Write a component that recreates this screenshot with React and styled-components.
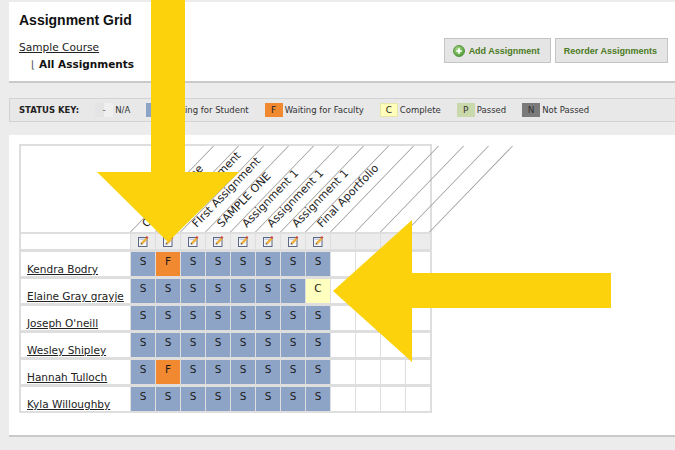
import React from "react";
import styled, { createGlobalStyle, css } from "styled-components";

const GlobalStyle = createGlobalStyle`
  html, body { margin: 0; padding: 0; background: #ececec; }
  body { font-family: "DejaVu Sans", Verdana, sans-serif; color: #222; }
`;

const Page = styled.div`
  position: relative;
  width: 675px;
  height: 450px;
  overflow: hidden;
  box-sizing: border-box;
  padding: 2px 0 0 9px;
  display: flex;
  flex-direction: column;
`;

const TopPanel = styled.header`
  flex: none;
  box-sizing: border-box;
  height: 81px;
  background: #fff;
  border-bottom: 2px solid #c9c9c9;
  display: flex;
  justify-content: space-between;
  padding: 0 7px 0 10px;
`;

const TitleBlock = styled.div`
  padding-top: 9px;
  display: flex;
  flex-direction: column;
  align-items: flex-start;
`;

const Title = styled.h1`
  margin: 0;
  font: bold 14px/18px "Liberation Sans", Arial, sans-serif;
  color: #111;
`;

const CourseLink = styled.a`
  margin-top: 11px;
  font-size: 10.6px;
  line-height: 14px;
  color: #222;
  text-decoration: underline;
`;

const Crumb = styled.div`
  margin-top: 3px;
  padding-left: 12px;
  display: flex;
  align-items: center;
  font-size: 10.5px;
  line-height: 14px;
  font-weight: bold;
  color: #111;
`;

const CrumbMark = styled.span`
  font-weight: normal;
  color: #555;
  margin-right: 4px;
`;

const ButtonGroup = styled.div`
  align-self: flex-start;
  margin-top: 36px;
  display: flex;
  gap: 4px;
`;

const Button = styled.button`
  height: 25px;
  box-sizing: border-box;
  display: inline-flex;
  align-items: center;
  gap: 4px;
  padding: 0 10px 0 8px;
  border: 1px solid #c4c4c4;
  background: #e5e5e5;
  font: bold 9px "Liberation Sans", Arial, sans-serif;
  color: #4b7a22;
  cursor: pointer;
`;

const StatusBar = styled.div`
  flex: none;
  margin-top: 15px;
  height: 24px;
  box-sizing: border-box;
  border: 1px solid #d2d2d2;
  border-right: none;
  background: #e8e8e8;
  display: flex;
  align-items: center;
  gap: 16px;
  padding-left: 9px;
`;

const KeyTitle = styled.span`
  font-size: 8.5px;
  font-weight: bold;
  color: #222;
`;

const KeyItem = styled.span`
  display: flex;
  align-items: center;
  gap: 2px;
  font-size: 8.5px;
  color: #333;
`;

const swatchStyles = {
  na: css`
    background: linear-gradient(90deg, #e4e4e4 50%, #efefef 50%);
    color: #555;
  `,
  S: css`background: #8ea4c7; color: #222;`,
  F: css`background: #f0892f; color: #222;`,
  C: css`background: #ffffbb; color: #222; box-shadow: inset 0 0 0 1px #e6e6a8;`,
  P: css`background: #c9d9ab; color: #333;`,
  N: css`background: #7b7b7b; color: #333;`,
};

const Swatch = styled.span`
  width: 18px;
  height: 14px;
  display: flex;
  align-items: center;
  justify-content: center;
  font-size: 9px;
  ${(p) => swatchStyles[p.$kind]}
`;

const BodyPanel = styled.main`
  flex: none;
  margin-top: 13px;
  height: 302px;
  box-sizing: border-box;
  background: #fff;
  border-bottom: 2px solid #c9c9c9;
  padding: 9px 0 0 10px;
  display: flex;
  align-items: flex-start;
`;

const Table = styled.div`
  display: flex;
  flex-direction: column;
  border: 2px solid #dedede;
  background: #fff;
`;

const HeaderRow = styled.div`
  display: flex;
  height: 86px;
  border-bottom: 2px solid #dedede;
`;

const HeaderBlank = styled.div`
  flex: none;
  width: 109px;
`;

const HeaderCol = styled.div`
  flex: none;
  display: grid;
  grid-template-columns: 25px;
  grid-template-rows: 86px;
`;

const DiagonalLine = styled.div`
  grid-area: 1 / 1;
  border-left: 1px solid #959595;
  ${(p) => p.$last && css`border-right: 1px solid #959595;`}
  transform: skewX(-44deg);
  transform-origin: bottom left;
`;

const HeaderLabel = styled.span`
  grid-area: 1 / 1;
  align-self: end;
  justify-self: start;
  white-space: nowrap;
  font-size: 11px;
  line-height: 13px;
  color: #222;
  margin: 0 0 2px 19px;
  transform-origin: 0 100%;
  transform: rotate(-46deg);
`;

const BodyGrid = styled.div`
  display: grid;
  grid-template-columns: 109px repeat(12, 24px);
  grid-template-rows: 15px;
  grid-auto-rows: 24px;
  row-gap: 3px;
  column-gap: 1px;
  background: #dedede;
`;

const NameCell = styled.div`
  background: #fff;
  display: flex;
  align-items: flex-end;
  padding-left: 6px;
`;

const NameLink = styled.a`
  font-size: 10.5px;
  line-height: 13px;
  color: #222;
  text-decoration: underline;
`;

const IconCell = styled.div`
  background: #ececec;
  display: flex;
  align-items: center;
  justify-content: center;
`;

const statusBg = { S: "#8ea4c7", F: "#f0892f", C: "#ffffc0", "": "#ffffff" };

const StatusCell = styled.div`
  background: ${(p) => statusBg[p.$status]};
  font-size: 10.5px;
  line-height: 13px;
  padding-top: 3px;
  text-align: center;
  color: #1b1b1b;
`;

const ArrowLayer = styled.svg`
  position: absolute;
  left: 0;
  top: 0;
  pointer-events: none;
`;

const EditIcon = () => (
  <svg width="11" height="11" viewBox="0 0 11 11">
    <rect x="0.5" y="1.5" width="8.5" height="9" fill="#f3f5fa" stroke="#5b6785" />
    <rect x="1.5" y="2.5" width="6.5" height="1.4" fill="#c3cde2" />
    <path d="M3.6 7.6 L8.6 2.6" stroke="#efb13c" strokeWidth="2.3" />
    <path d="M8.2 2.2 L9.6 0.8" stroke="#d4473d" strokeWidth="2.3" />
    <path d="M2.6 8.6 L3 6.8 L4.5 8.2 Z" fill="#3b3b3b" />
  </svg>
);

const AddIcon = () => (
  <svg width="12" height="12" viewBox="0 0 12 12">
    <defs>
      <radialGradient id="addg" cx="40%" cy="35%" r="70%">
        <stop offset="0%" stopColor="#a6d98a" />
        <stop offset="100%" stopColor="#4e9a35" />
      </radialGradient>
    </defs>
    <circle cx="6" cy="6" r="5.5" fill="url(#addg)" stroke="#4a8a30" strokeWidth="0.8" />
    <path d="M6 3.2v5.6M3.2 6h5.6" stroke="#fff" strokeWidth="1.7" />
  </svg>
);

const assignments = [
  "Course Outline",
  "Essay Assignment",
  "FIrst Assignment",
  "SAMPLE ONE",
  "Assignment 1",
  "Assignment 1",
  "Assignment 1",
  "Final Aportfolio",
  "",
  "",
  "",
  "",
];

const students = [
  { name: "Kendra Bodry", marks: "SFSSSSSS" },
  { name: "Elaine Gray grayje", marks: "SSSSSSSC" },
  { name: "Joseph O'neill", marks: "SSSSSSSS" },
  { name: "Wesley Shipley", marks: "SSSSSSSS" },
  { name: "Hannah Tulloch", marks: "SFSSSSSS" },
  { name: "Kyla Willoughby", marks: "SSSSSSSS" },
];

const keys = [
  { kind: "na", mark: "-", label: "N/A" },
  { kind: "S", mark: "S", label: "Waiting for Student" },
  { kind: "F", mark: "F", label: "Waiting for Faculty" },
  { kind: "C", mark: "C", label: "Complete" },
  { kind: "P", mark: "P", label: "Passed" },
  { kind: "N", mark: "N", label: "Not Passed" },
];

export default function App() {
  return (
    <>
      <GlobalStyle />
      <Page>
        <TopPanel>
          <TitleBlock>
            <Title>Assignment Grid</Title>
            <CourseLink href="#">Sample Course</CourseLink>
            <Crumb>
              <CrumbMark>⌊</CrumbMark>All Assignments
            </Crumb>
          </TitleBlock>
          <ButtonGroup>
            <Button>
              <AddIcon />
              Add Assignment
            </Button>
            <Button>Reorder Assignments</Button>
          </ButtonGroup>
        </TopPanel>

        <StatusBar>
          <KeyTitle>STATUS KEY:</KeyTitle>
          {keys.map((k) => (
            <KeyItem key={k.label}>
              <Swatch $kind={k.kind}>{k.mark}</Swatch>
              {k.label}
            </KeyItem>
          ))}
        </StatusBar>

        <BodyPanel>
          <Table>
            <HeaderRow>
              <HeaderBlank />
              {assignments.map((a, i) => (
                <HeaderCol key={i}>
                  <DiagonalLine $last={i === assignments.length - 1} />
                  {a && <HeaderLabel>{a}</HeaderLabel>}
                </HeaderCol>
              ))}
            </HeaderRow>
            <BodyGrid>
              <NameCell />
              {assignments.map((a, i) => (
                <IconCell key={i}>{a && <EditIcon />}</IconCell>
              ))}
              {students.map((s) => (
                <React.Fragment key={s.name}>
                  <NameCell>
                    <NameLink href="#">{s.name}</NameLink>
                  </NameCell>
                  {assignments.map((a, i) => {
                    const m = s.marks[i] || "";
                    return (
                      <StatusCell key={i} $status={m}>
                        {m}
                      </StatusCell>
                    );
                  })}
                </React.Fragment>
              ))}
            </BodyGrid>
          </Table>
        </BodyPanel>

        <ArrowLayer width="675" height="450" viewBox="0 0 675 450">
          <polygon
            points="151,0 185,0 185,172 239,172 168,242 97,172 151,172"
            fill="#fcd20c"
          />
          <polygon
            points="611,273 611,308 412,308 412,362 333,291 412,220 412,273"
            fill="#fcd20c"
          />
        </ArrowLayer>
      </Page>
    </>
  );
}
